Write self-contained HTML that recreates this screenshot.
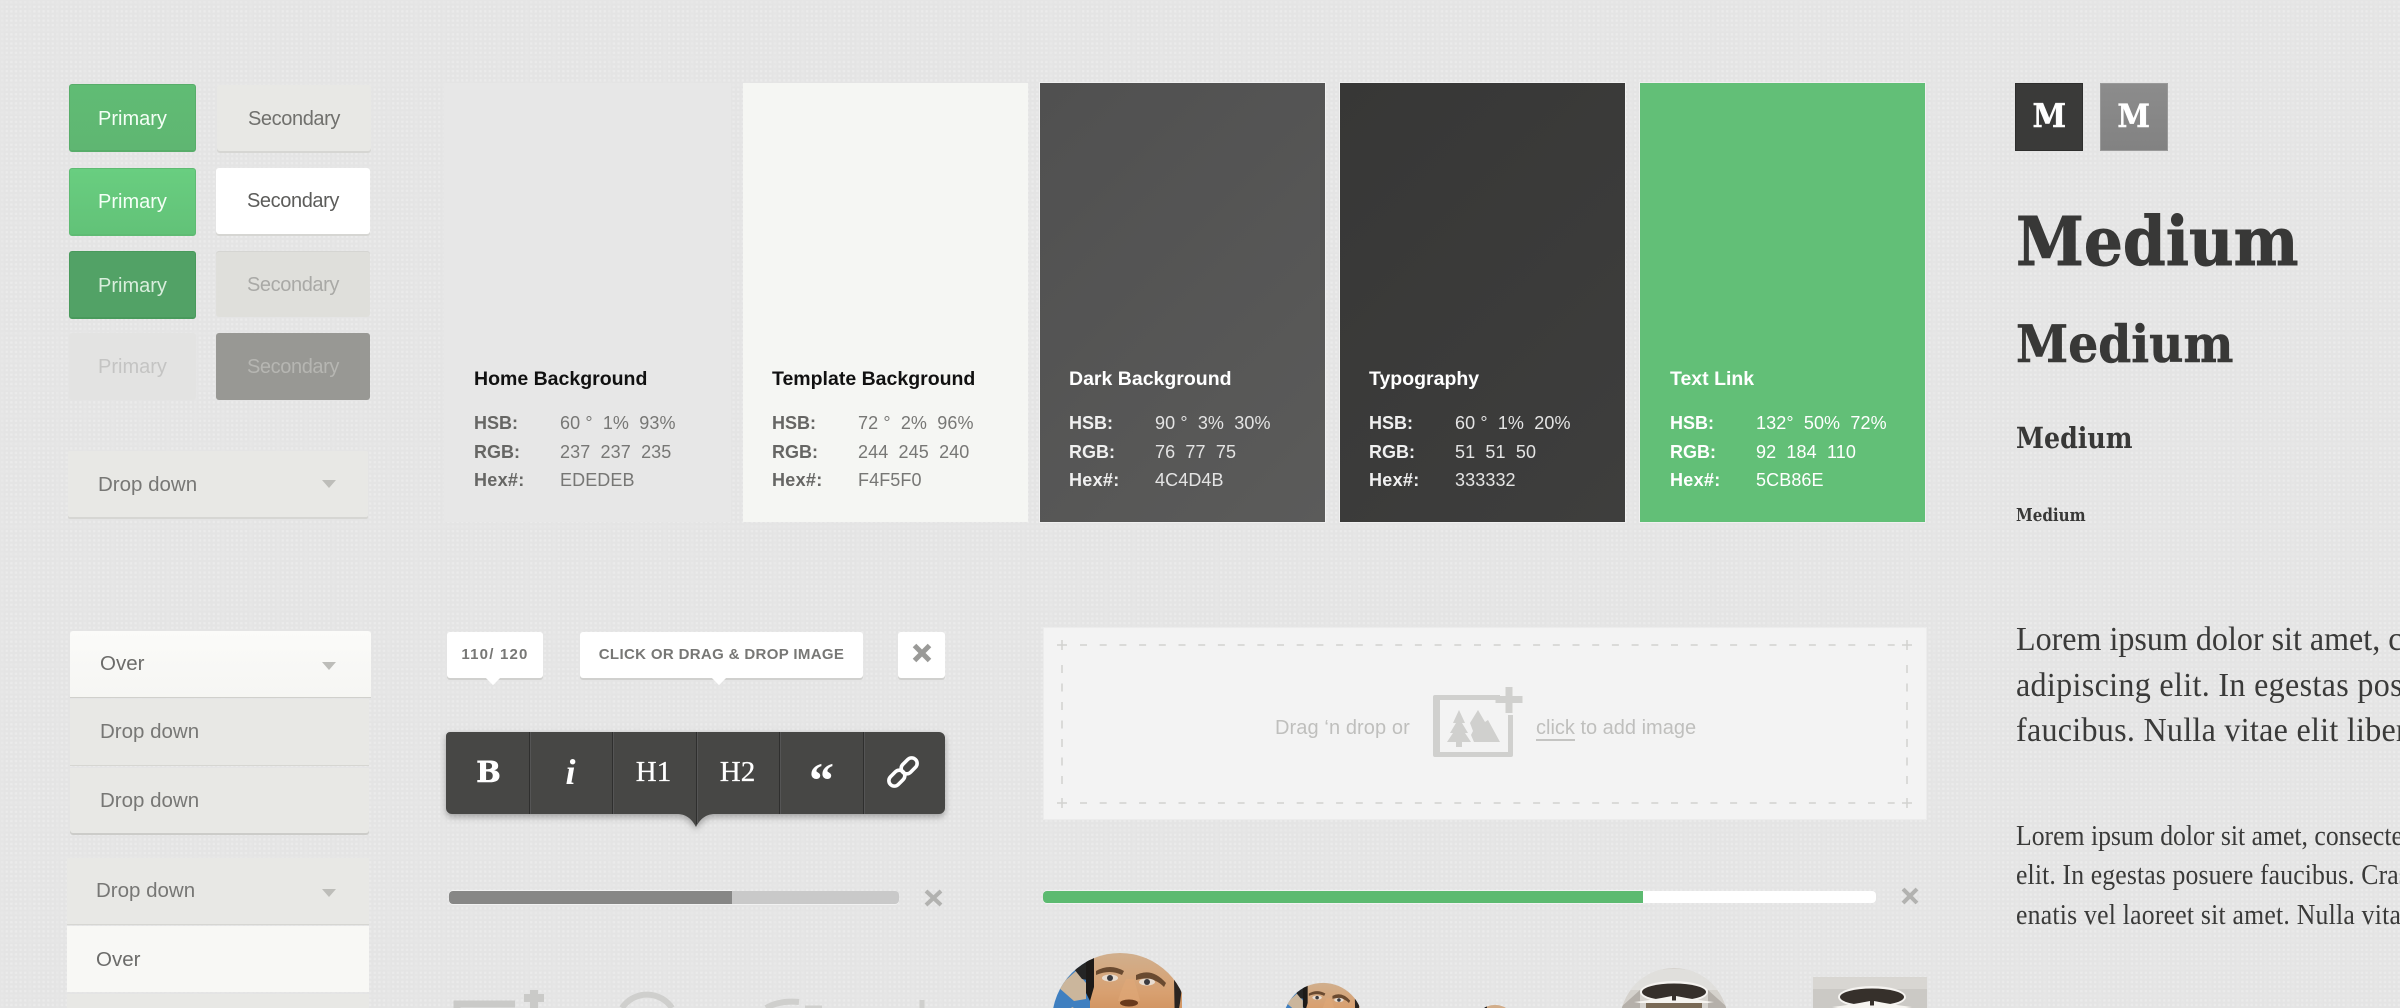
<!DOCTYPE html>
<html lang="en"><head><meta charset="utf-8"><title>Medium UI Kit</title>
<style>
html,body{margin:0;padding:0;width:2400px;height:1008px;overflow:hidden;background:#e5e5e5}
#w{position:relative;width:2400px;height:1008px;overflow:hidden;font-family:"Liberation Sans",sans-serif}
#w>*{position:absolute}
.btn{box-sizing:border-box;text-align:center;font-size:20px;line-height:68px;border-radius:3px}
.p{left:69px;width:127px;height:68px;color:#f4fff6;border:1px solid #58ad6a;border-bottom-width:2px}
.s{width:154px;height:66px;letter-spacing:-.4px;color:#70706d;background:#e8e8e5}
.dd{box-sizing:border-box;font-size:20.5px;color:#777775;line-height:66px;padding-left:30px;background:#e8e8e5;overflow:hidden}
.arr{width:0;height:0;border-left:7.5px solid transparent;border-right:7.5px solid transparent;border-top:8px solid #bdbdb9}
.sw{top:83px;height:439px}
.t{font-size:19.5px;font-weight:bold;line-height:30px;white-space:nowrap;margin-top:1px}
.l{font-size:18px;font-weight:bold;line-height:28px;white-space:nowrap}
.v{font-size:18px;line-height:28px;white-space:pre;letter-spacing:.1px}
.dk{color:#fff}.dkl{color:#f0f0f0}.dkv{color:#e4e4e4}
.lt{color:#111}.ltl{color:#666664}.ltv{color:#777775}
.m{font-family:"DejaVu Serif",serif;font-weight:bold;color:#383837;line-height:0;white-space:nowrap;left:2016px;transform-origin:0 0}
.b{font-family:"Liberation Serif",serif;color:#3a3a39;line-height:0;white-space:nowrap;left:2016px;transform-origin:0 0}
.f1{font-size:34px;transform:scaleX(.943)}.f2{font-size:28px;transform:scaleX(.918)}
.tip{top:632px;height:46px;background:#fff;border-radius:3px;box-shadow:0 2px 0 #d0d0ce;text-align:center;font-weight:bold;font-size:15px;line-height:46px;color:#777775}
.nub{width:10px;height:10px;background:#fff;transform:rotate(45deg);top:673px}
.tb{font-family:"Liberation Serif",serif;color:#fff;text-align:center;line-height:80px;top:732px;width:83px}
.div{top:732px;width:1px;height:82px;background:#2f2f2e;box-shadow:1px 0 0 #555}
.ms{top:83px;width:68px;height:68px;box-sizing:border-box;text-align:center;font:bold 33px/64px "DejaVu Serif",serif;color:#fff;-webkit-text-stroke:.5px #fff}
.ms span{display:inline-block;transform:scaleX(.92)}
</style></head><body><div id="w">

<svg style="left:0;top:0" width="2400" height="1008"><defs>
<pattern id="pt" width="4.6" height="4.6" patternUnits="userSpaceOnUse"><rect x="1" y="1" width="2.3" height="2.3" fill="#ebebeb"/></pattern>
<pattern id="pt2" width="27.6" height="27.6" patternUnits="userSpaceOnUse"><rect width="27.6" height="4.6" fill="#e5e5e5" opacity=".55"/><rect width="4.6" height="27.6" fill="#e5e5e5" opacity=".55"/></pattern>
</defs><rect width="2400" height="1008" fill="#e4e4e4"/><rect width="2400" height="1008" fill="url(#pt)"/><rect width="2400" height="1008" fill="url(#pt2)"/></svg>

<!-- Buttons -->
<div class="btn p" style="top:84px;background:linear-gradient(#60bc74,#5fb672)">Primary</div>
<div class="btn p" style="top:168px;background:linear-gradient(#69ce80,#62c278);border-color:#5fbb73;line-height:66px">Primary</div>
<div class="btn p" style="top:251px;background:#52a266;border-color:#499a5c;color:#d9eedd">Primary</div>
<div class="btn p" style="top:333px;background:#e3e3e2;border:0;color:#c4c4c3;width:127px;height:67px">Primary</div>
<div class="btn s" style="left:217px;top:85px;box-shadow:0 2px 0 #d6d6d3">Secondary</div>
<div class="btn s" style="left:216px;top:168px;background:#fff;color:#5c5c5a;box-shadow:0 2px 0 #d6d6d3;line-height:66px">Secondary</div>
<div class="btn s" style="left:216px;top:251px;background:#dfdfdb;color:#a9a9a6;box-shadow:inset 0 1px 0 #d5d5d2">Secondary</div>
<div class="btn s" style="left:216px;top:333px;height:67px;background:#989894;color:#b6b6b2">Secondary</div>

<div class="dd" style="left:68px;top:451px;width:300px;height:66px;box-shadow:0 2px 0 #d6d6d3;border-radius:2px;line-height:67px">Drop down</div>
<div class="arr" style="left:322px;top:480px"></div>

<div class="dd" style="left:70px;top:631px;width:301px;height:66px;border-radius:3px 3px 0 0;background:linear-gradient(#fbfbf9,#f6f6f3);color:#6c6c6a;box-shadow:0 1px 0 #d0d0cc">Over</div>
<div class="arr" style="left:322px;top:662px"></div>
<div class="dd" style="left:70px;top:699px;width:299px;height:66px;box-shadow:0 1px 0 #d6d6d2">Drop down</div>
<div class="dd" style="left:70px;top:768px;width:299px;height:65px;box-shadow:0 2px 0 #ccccc9;border-radius:0 0 3px 3px">Drop down</div>

<div class="dd" style="left:67px;top:858px;width:302px;height:66px;padding-left:29px;box-shadow:0 1px 0 #d6d6d2">Drop down</div>
<div class="arr" style="left:322px;top:889px"></div>
<div class="dd" style="left:67px;top:926px;width:302px;height:66px;padding-left:29px;background:#f8f8f5;color:#6c6c6a;line-height:67px">Over</div>
<div class="dd" style="left:67px;top:994px;width:302px;height:14px"></div>

<!-- Swatches -->
<div class="sw" style="left:444px;width:287px;background:#e7e7e7"></div>
<div class="sw" style="left:743px;width:285px;background:#f5f6f3"></div>
<div class="sw" style="left:1040px;width:285px;background:linear-gradient(135deg,#505050,#5b5b5a);box-shadow:0 0 0 1px #f0f0f0"></div>
<div class="sw" style="left:1340px;width:285px;background:linear-gradient(135deg,#373736,#3e3e3d);box-shadow:0 0 0 1px #f0f0f0"></div>
<div class="sw" style="left:1640px;width:285px;background:#62bf77;box-shadow:0 0 0 1px #f0f0f0"></div>

<div class="t lt" style="left:474px;top:363px">Home Background</div>
<div class="l ltl" style="left:474px;top:409px">HSB:</div><div class="v ltv" style="left:560px;top:409px">60 °  1%  93%</div>
<div class="l ltl" style="left:474px;top:438px">RGB:</div><div class="v ltv" style="left:560px;top:438px">237  237  235</div>
<div class="l ltl" style="left:474px;top:466px;letter-spacing:.3px">Hex#:</div><div class="v ltv" style="left:560px;top:466px">EDEDEB</div>

<div class="t lt" style="left:772px;top:363px">Template Background</div>
<div class="l ltl" style="left:772px;top:409px">HSB:</div><div class="v ltv" style="left:858px;top:409px">72 °  2%  96%</div>
<div class="l ltl" style="left:772px;top:438px">RGB:</div><div class="v ltv" style="left:858px;top:438px">244  245  240</div>
<div class="l ltl" style="left:772px;top:466px;letter-spacing:.3px">Hex#:</div><div class="v ltv" style="left:858px;top:466px">F4F5F0</div>

<div class="t dk" style="left:1069px;top:363px">Dark Background</div>
<div class="l dkl" style="left:1069px;top:409px">HSB:</div><div class="v dkv" style="left:1155px;top:409px">90 °  3%  30%</div>
<div class="l dkl" style="left:1069px;top:438px">RGB:</div><div class="v dkv" style="left:1155px;top:438px">76  77  75</div>
<div class="l dkl" style="left:1069px;top:466px;letter-spacing:.3px">Hex#:</div><div class="v dkv" style="left:1155px;top:466px">4C4D4B</div>

<div class="t dk" style="left:1369px;top:363px">Typography</div>
<div class="l dkl" style="left:1369px;top:409px">HSB:</div><div class="v dkv" style="left:1455px;top:409px">60 °  1%  20%</div>
<div class="l dkl" style="left:1369px;top:438px">RGB:</div><div class="v dkv" style="left:1455px;top:438px">51  51  50</div>
<div class="l dkl" style="left:1369px;top:466px;letter-spacing:.3px">Hex#:</div><div class="v dkv" style="left:1455px;top:466px">333332</div>

<div class="t dk" style="left:1670px;top:363px">Text Link</div>
<div class="l dk" style="left:1670px;top:409px">HSB:</div><div class="v dk" style="left:1756px;top:409px">132°  50%  72%</div>
<div class="l dk" style="left:1670px;top:438px">RGB:</div><div class="v dk" style="left:1756px;top:438px">92  184  110</div>
<div class="l dk" style="left:1670px;top:466px;letter-spacing:.3px">Hex#:</div><div class="v dk" style="left:1756px;top:466px">5CB86E</div>

<!-- Typography column -->
<div class="ms" style="left:2015px;background:#3a3a39;border:1px solid #2e2e2d"><span>M</span></div>
<div class="ms" style="left:2100px;background:linear-gradient(#8c8c8c,#828282);border:1px solid #999;font-size:32px"><span>M</span></div>
<div class="m" style="top:241.5px;font-size:67px;transform:scaleX(.915);-webkit-text-stroke:.9px #383837">Medium</div>
<div class="m" style="top:345.1px;font-size:51px;transform:scaleX(.925);-webkit-text-stroke:.6px #383837">Medium</div>
<div class="m" style="top:437.8px;font-size:29px;transform:scaleX(.872)">Medium</div>
<div class="m" style="top:515.7px;font-size:18px;transform:scaleX(.84)">Medium</div>
<div class="b f1" style="top:640px">Lorem ipsum dolor sit amet, consectetur</div>
<div class="b f1" style="top:685.5px;letter-spacing:.35px">adipiscing elit. In egestas posuere</div>
<div class="b f1" style="top:731px;letter-spacing:.3px">faucibus. Nulla vitae elit libero</div>
<div class="b f2" style="top:837px">Lorem ipsum dolor sit amet, consectetur adipiscing</div>
<div class="b f2" style="top:876px;letter-spacing:.15px">elit. In egestas posuere faucibus. Cras mattis</div>
<div class="b f2" style="top:916px;letter-spacing:.25px">enatis vel laoreet sit amet. Nulla vitae elit</div>

<!-- Tooltips -->
<div class="tip" style="left:447px;width:96px;letter-spacing:1.2px">110/ 120</div>
<div class="tip" style="left:580px;width:283px;letter-spacing:.35px">CLICK OR DRAG &amp; DROP IMAGE</div>
<div class="tip" style="left:898px;width:47px"></div>
<div class="nub" style="left:488px"></div>
<div class="nub" style="left:714px"></div>
<svg style="left:912px;top:643px" width="20" height="20"><path d="M2.5 2.5L17.5 17.5M17.5 2.5L2.5 17.5" stroke="#9a9a98" stroke-width="5"/></svg>

<!-- Toolbar -->
<svg style="left:440px;top:726px" width="512" height="112"><defs><filter id="sh" x="-5%" y="-20%" width="110%" height="150%"><feDropShadow dx="0" dy="3" stdDeviation="3.5" flood-color="#000" flood-opacity=".3"/></filter></defs>
<path filter="url(#sh)" d="M10 6H499a6 6 0 0 1 6 6V82a6 6 0 0 1-6 6H275C266 88 260 93 256 101C252 93 246 88 237 88H12a6 6 0 0 1-6-6V10a4 4 0 0 1 4-4Z" fill="#464645"/></svg>
<div class="div" style="left:529px"></div><div class="div" style="left:612px"></div>
<div class="div" style="left:696px;height:92px"></div><div class="div" style="left:779px"></div><div class="div" style="left:863px"></div>
<div class="tb" style="left:447px;font-family:'DejaVu Serif',serif;font-size:29px;font-weight:bold;-webkit-text-stroke:.6px #fff">B</div>
<div class="tb" style="left:529px;font-size:36px;font-style:italic;font-weight:bold">i</div>
<div class="tb" style="left:612px;font-size:29px;-webkit-text-stroke:.3px #fff">H1</div>
<div class="tb" style="left:696px;font-size:29px;-webkit-text-stroke:.3px #fff">H2</div>
<div class="tb" style="left:780px;font-size:50px;line-height:96px;font-weight:bold">“</div>
<svg style="left:885px;top:754px" width="36" height="36" viewBox="0 0 36 36"><g fill="none" stroke="#fff" stroke-width="3.6" transform="rotate(-45 18 18)"><rect x=".3" y="12.5" width="18" height="11" rx="5.5"/><rect x="17.7" y="12.5" width="18" height="11" rx="5.5"/></g></svg>

<!-- Dropzone -->
<div style="left:1044px;top:628px;width:882px;height:191px;background:#f3f3f3;box-shadow:0 0 0 1px #ececec"></div>
<svg style="left:1044px;top:628px" width="882" height="191" fill="none" stroke="#d2d2d0" stroke-width="1.5">
<path d="M36 17H860M36 175H860" stroke-dasharray="7 12.7"/>
<path d="M18 37V160M863 37V160" stroke-dasharray="8 10.5"/>
<path d="M13 17h10M18 12v10M858 17h10M863 12v10M13 175h10M18 170v10M858 175h10M863 170v10"/></svg>
<div style="left:1275px;top:713px;font-size:20px;line-height:30px;color:#bfbfbd;letter-spacing:.1px;white-space:pre">Drag ‘n drop or</div>
<div style="left:1536px;top:713px;font-size:20px;line-height:30px;color:#bfbfbd;white-space:pre"><span style="border-bottom:2px solid #c4c4c2">click</span> to add image</div>
<svg style="left:1430px;top:685px" width="96" height="78" fill="#d0d0ce">
<path d="M3 12a2 2 0 0 1 2-2H70v5H10V67H78V30H83V70a2 2 0 0 1-2 2H5a2 2 0 0 1-2-2Z"/>
<path d="M75.500 2h7v9h10v7h-10v10h-7V18h-10v-7h10Z"/>
<path d="M29 25l6 13h-3l6 10h-3l6 9H32v5h-6v-5H17l6-9h-3l6-10h-3Z"/>
<path d="M48 25l7 12 3-2 12 22H44l-3-7 2-4-3-8Z"/></svg>

<!-- Progress bars -->
<div style="left:449px;top:891px;width:450px;height:13px;background:#c9c9c9;border-radius:4px;box-shadow:0 1px 0 #f2f2f2"></div>
<div style="left:449px;top:891px;width:283px;height:13px;background:#878786;border-radius:4px 0 0 4px;box-shadow:0 -1px 0 #f2f2f2,0 1px 0 #f2f2f2"></div>
<svg style="left:924px;top:889px" width="19" height="18"><path d="M2 2L17 16M17 2L2 16" stroke="#b2b2b0" stroke-width="4"/></svg>
<div style="left:1043px;top:891px;width:833px;height:12px;background:#fff;border-radius:4px"></div>
<div style="left:1043px;top:891px;width:600px;height:12px;background:#5cba70;border-radius:4px 0 0 4px;box-shadow:0 -1px 0 #f2f2f2,0 1px 0 #f2f2f2"></div>
<svg style="left:1901px;top:887px" width="18" height="18"><path d="M2 2L16 16M16 2L2 16" stroke="#b2b2b0" stroke-width="4"/></svg>

<!-- Bottom icons and images -->
<svg style="left:0;top:940px" width="2400" height="68"><defs>
<clipPath id="c1"><circle cx="0" cy="0" r="68"/></clipPath>
<clipPath id="c2"><circle cx="1674" cy="82" r="54"/></clipPath>
<clipPath id="c3"><rect x="1813" y="37" width="114" height="31"/></clipPath>
<linearGradient id="skin" x1="0" y1="0" x2="0" y2="1"><stop offset="0" stop-color="#d0b08f"/><stop offset=".3" stop-color="#d8a070"/><stop offset=".6" stop-color="#c9854e"/><stop offset="1" stop-color="#b5703a"/></linearGradient>
<g id="face" clip-path="url(#c1)">
<rect x="-70" y="-70" width="140" height="140" fill="#dfe6ee"/>
<rect x="-70" y="-70" width="42" height="140" fill="#3f7fc0"/>
<path d="M-62-34L-44-50L-34-38L-34-22L-46-20ZM-48-14L-32-6L-32 14L-50 18L-60 4Z" fill="#cbb69c"/>
<path d="M-46-52L-30-62L-26-40L-38-42Z" fill="#252525"/>
<path d="M-30-70H62V70H-30Z" fill="url(#skin)"/>
<path d="M-34-62L-26-66L-26-34L-30-20L-34-28Z" fill="#1d1a18"/>
<path d="M54-42L62-34L60-18L55 10Z" fill="#2a2421"/>
<path d="M-24-50Q-10-58 4-50L2-46Q-10-52-24-46Z" fill="#6a4a30"/>
<path d="M16-46Q32-54 46-38L44-34Q32-46 16-41Z" fill="#6a4a30"/>
<ellipse cx="-10" cy="-43" rx="8" ry="3.500" fill="#e8dcd0"/><circle cx="-10" cy="-43" r="3" fill="#3b3b40"/>
<ellipse cx="27" cy="-39" rx="8" ry="3.500" fill="#e8dcd0"/><circle cx="27" cy="-39" r="3" fill="#3b3b40"/>
<path d="M6-42Q0-28-2-20H20Q17-32 14-42Z" fill="#e0a878" opacity=".6"/>
<ellipse cx="9" cy="-18" rx="9" ry="3.500" fill="#6a3a1c"/>
</g></defs>
<g fill="none" stroke="#cacac8" stroke-width="7"><path d="M457 68V64H515"/><path d="M534 50V68M524 58H544" stroke-width="8"/></g>
<path d="M622 68A30 30 0 0 1 672 68" fill="none" stroke="#cfcfcd" stroke-width="6"/>
<path d="M766 68Q780 60 799 62" fill="none" stroke="#cfcfcd" stroke-width="6"/>
<path d="M805 68H822M922 60V68" stroke="#cfcfcd" stroke-width="5" fill="none"/>
<use href="#face" transform="translate(1120 81)"/>
<use href="#face" transform="translate(1323 83) scale(.59)"/>
<use href="#face" transform="translate(1495 86) scale(.31)"/>
<g clip-path="url(#c2)">
<circle cx="1674" cy="82" r="54" fill="#d5d2cd"/>
<path d="M1620 40Q1674 18 1728 40V50H1620Z" fill="#e0dfdc"/>
<path d="M1620 68L1640 50V68ZM1728 68L1708 50V68Z" fill="#b5b0aa"/>
<g id="car"><ellipse cx="1674" cy="52" rx="34" ry="11" fill="#f5f3f0"/><ellipse cx="1674" cy="52" rx="32" ry="8.500" fill="#36302b"/>
<path d="M1634 62Q1652 60 1672 56V63H1640ZM1714 62Q1696 60 1676 56V63H1708Z" fill="#f6f4f0"/>
<path d="M1646 63H1702V68H1646Z" fill="#7a6a56"/></g>
</g>
<g clip-path="url(#c3)">
<rect x="1813" y="37" width="114" height="31" fill="#cbc9c5"/>
<path d="M1813 37h114v12h-114Z" fill="#d8d6d2"/>
<use href="#car" transform="translate(198 5)"/>
</g>
</svg>
</div></body></html>
